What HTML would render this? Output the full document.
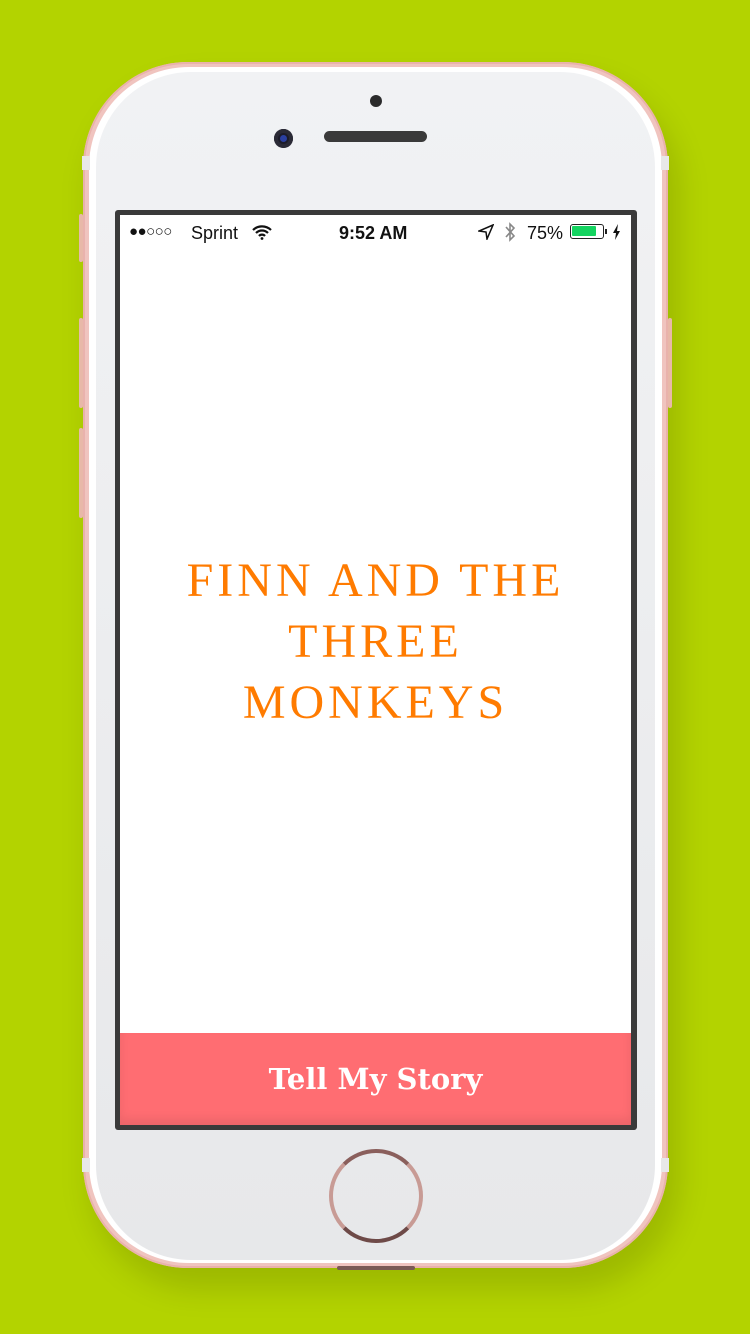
<!DOCTYPE html>
<html><head><meta charset="utf-8"><style>
html,body{margin:0;padding:0}
body{width:750px;height:1334px;background:#b3d300;position:relative;overflow:hidden;font-family:"Liberation Sans",sans-serif}
.shadow{position:absolute;left:90px;top:80px;width:590px;height:1210px;border-radius:110px;background:rgba(0,0,0,0.12);filter:blur(14px)}
.body{position:absolute;left:83px;top:62px;width:585px;height:1206px;border-radius:105px;background:#f0c4bf;box-shadow:inset 0 0 0 2px #e9b2ac}
.face{position:absolute;left:89px;top:67px;width:573px;height:1196px;border-radius:100px;background:#fff}
.face2{position:absolute;left:96px;top:72px;width:559px;height:1188px;border-radius:95px;background:linear-gradient(#f1f2f4,#e7e8ea)}
.band{position:absolute;width:8px;height:14px;background:#e8e8e8}
.btn{position:absolute;width:4px;background:#e8b8a8;border-radius:2px}
.screenframe{position:absolute;left:115px;top:210px;width:522px;height:920px;background:#3a3a3a;border-radius:3px}
.screen{position:absolute;left:120px;top:215px;width:511px;height:910px;background:#fff;overflow:hidden}
.sb{position:absolute;left:0;top:0;width:511px;height:36px;font-size:18px;color:#111}
.title{position:absolute;left:0;top:335px;width:511px;text-align:center;font-family:"Liberation Serif",serif;color:#ff7b00;font-size:48px;line-height:61px;letter-spacing:4px}
.cta{position:absolute;left:0;top:818px;width:511px;height:92px;background:#ff6d72;color:#fff;text-align:center;line-height:92px;font-family:"DejaVu Serif","Liberation Serif",serif;font-weight:bold;font-size:29px;box-shadow:inset 0 -6px 10px rgba(0,0,0,0.08)}
.home{position:absolute;left:329px;top:1149px;width:86px;height:86px;border-radius:50%;border:4px solid #c89b95;border-top-color:#8a5f5c;border-bottom-color:#6e4a48}
</style></head><body>
<div class="shadow"></div>
<div class="body"></div>
<div class="face"></div>
<div class="face2"></div>
<div class="band" style="left:82px;top:156px"></div>
<div class="band" style="left:661px;top:156px"></div>
<div class="band" style="left:82px;top:1158px"></div>
<div class="band" style="left:661px;top:1158px"></div>
<div class="btn" style="left:79px;top:214px;height:48px"></div>
<div class="btn" style="left:79px;top:318px;height:90px"></div>
<div class="btn" style="left:79px;top:428px;height:90px"></div>
<div class="btn" style="left:668px;top:318px;height:90px"></div>
<div style="position:absolute;left:370px;top:95px;width:12px;height:12px;border-radius:50%;background:#2b2b2b"></div>
<div style="position:absolute;left:274px;top:129px;width:19px;height:19px;border-radius:50%;background:#1c1c2a;box-shadow:inset 0 0 0 4px #2a2a36"><div style="position:absolute;left:6px;top:6px;width:7px;height:7px;border-radius:50%;background:#2a3fa0"></div></div>
<div style="position:absolute;left:324px;top:131px;width:103px;height:11px;border-radius:6px;background:#3a3a3a"></div>
<div class="screenframe"></div>
<div class="screen">
 <div class="sb">
  <span style="position:absolute;left:9px;top:8px;font-size:15px;letter-spacing:-0.5px">●●○○○</span>
  <span style="position:absolute;left:71px;top:8px">Sprint</span>
  <svg style="position:absolute;left:132px;top:9px" width="20" height="16" viewBox="0 0 20 16"><path d="M1 6a13 13 0 0 1 18 0M4 9a8.5 8.5 0 0 1 12 0M7 12a4 4 0 0 1 6 0" stroke="#111" stroke-width="2.2" fill="none"/><circle cx="10" cy="14.5" r="1.4" fill="#111"/></svg>
  <span style="position:absolute;left:219px;top:8px;font-weight:bold">9:52 AM</span>
  <svg style="position:absolute;left:358px;top:9px" width="16" height="16" viewBox="0 0 16 16"><path d="M15 1L1 7l7 1 1 7z" stroke="#111" stroke-width="1.5" fill="none"/></svg>
  <svg style="position:absolute;left:384px;top:7px" width="12" height="20" viewBox="0 0 12 20"><path d="M2 5l8 9-4 4V2l4 4-8 9" stroke="#888" stroke-width="1.6" fill="none"/></svg>
  <span style="position:absolute;left:407px;top:8px">75%</span>
  <div style="position:absolute;left:450px;top:9px;width:34px;height:15px;border:1.5px solid #222;border-radius:3px;box-sizing:border-box"><div style="position:absolute;left:1px;top:1px;width:24px;height:10px;background:#14d460;border-radius:1px"></div></div>
  <div style="position:absolute;left:485px;top:14px;width:2px;height:5px;background:#222"></div>
  <svg style="position:absolute;left:492px;top:9px" width="9" height="16" viewBox="0 0 9 16"><path d="M6 0L1 9h3l-1 7 5-9H5z" fill="#111"/></svg>
 </div>
 <div class="title">FINN AND THE<br>THREE<br>MONKEYS</div>
 <div class="cta">Tell My Story</div>
</div>
<div class="home"></div>
<div style="position:absolute;left:337px;top:1266px;width:78px;height:4px;background:#7a5a55;border-radius:2px"></div>
</body></html>
